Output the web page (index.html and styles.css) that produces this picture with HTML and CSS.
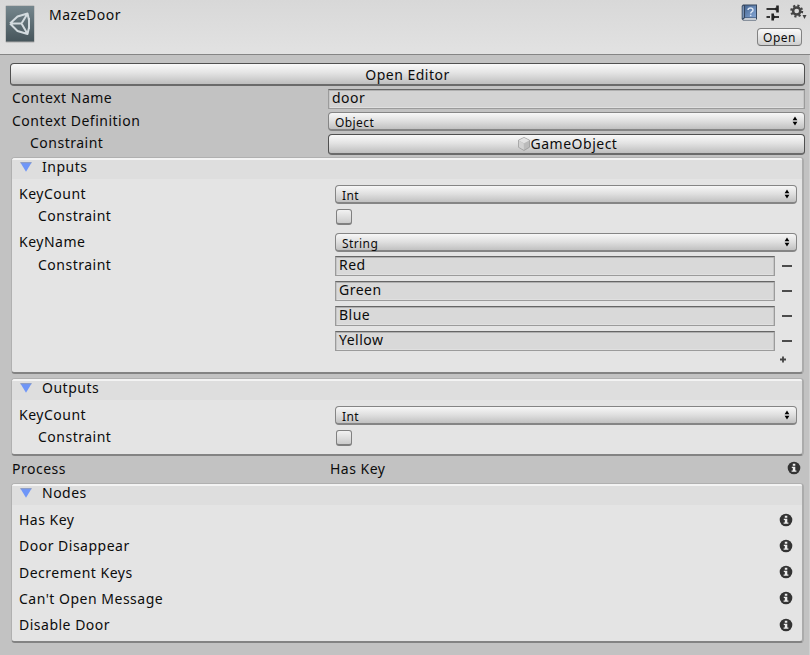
FILE: index.html
```html
<!DOCTYPE html>
<html lang="en">
<head>
<meta charset="utf-8">
<title>MazeDoor</title>
<link rel="stylesheet" href="styles.css">
</head>
<body>
<svg class="defs" width="0" height="0">
  <defs>
    <symbol id="info" viewBox="0 0 14 14"><circle cx="7" cy="7" r="6.3" fill="#333"/><path d="M5.800 2.800h2.500v2H5.800zM4.800 5.700h3.500v3.800h1.100v1.300H4.600V9.500h1.200V7h-1z" fill="#eee"/></symbol>
    <symbol id="updown" viewBox="0 0 6 10"><path d="M3 .5 5.400 4.200H.6zM3 9.500 5.400 5.800H.6z" fill="#000"/></symbol>
    <symbol id="fold" viewBox="0 0 12 10"><path d="M.4.5h11.200L6 9.800z" fill="#6f96f8"/><path d="M.4.7h11.200" stroke="#8998bd"/></symbol>
  </defs>
</svg>
<header class="header">
  <svg class="asset" viewBox="0 0 30 38" width="30" height="38">
    <defs><linearGradient id="ag" x2="0" y2="1"><stop stop-color="#75868d"/><stop offset="1" stop-color="#46555b"/></linearGradient></defs>
    <rect x=".5" y=".5" width="29" height="37" rx="1" fill="#aaa"/><rect x="1" y="1" width="28" height="35.500" fill="url(#ag)"/>
    <g fill="none" stroke="#d3dbdf" stroke-width="2"><path d="M5 18.500 12.500 11.500 22.500 8.500 24 15M5 18.500l7.500 7.500 10 3L24 22.500M5 18.500h11.500l5.500-9M16.500 18.500l5.500 9.500M24 13v11" stroke-linejoin="round"/></g>
  </svg>
  <h1 class="title">MazeDoor</h1>
  <div class="tools">
    <div class="icons">
      <svg width="17" height="18" viewBox="0 0 17 18">
        <defs><linearGradient id="bg" x2="1" y2="1"><stop stop-color="#486894"/><stop offset="1" stop-color="#83a5d4"/></linearGradient></defs>
        <path d="M2 .5h14v14l-1 2H2L.7 15V2z" fill="#34465f"/><path d="M4 1.500h11v12H4z" fill="url(#bg)"/><path d="M1.500 2.500 3 1.500v12l-1.500 1z" fill="#7992b5"/><path d="M2 15.500 4 14h11v2H3z" fill="#c5cbd3"/>
        <path d="M7 6q.2-2 2.500-2T12 6q0 1.200-1.300 1.800-1 .6-1 1.700M9.700 10.800v1.400" fill="none" stroke="#d9e5f5" stroke-width="1.500"/>
      </svg>
      <svg class="sliders" width="14" height="16" viewBox="0 0 14 16"><path d="M.5 4H9M.5 12H4M9 12h4" fill="none" stroke="#333" stroke-width="2"/><path d="M11.500.5v7M6.700 8.500v7M6.700 12H9M9 4h2" fill="none" stroke="#222" stroke-width="2.600"/></svg>
      <svg width="17" height="16" viewBox="0 0 17 16"><circle cx="6.700" cy="7" r="3.600" fill="none" stroke="#444" stroke-width="2.500"/><circle cx="6.700" cy="7" r="5.400" fill="none" stroke="#444" stroke-width="2.200" stroke-dasharray="2.120 2.120"/><path d="M12.500 11h4l-2 4z" fill="#444"/></svg>
    </div>
    <button class="open">Open</button>
  </div>
</header>
<main class="body">
  <button class="btn editor">Open Editor</button>
  <div class="row r-name"><label>Context Name</label><div class="field">door</div></div>
  <div class="row r-def"><label>Context Definition</label><div class="popup">Object<svg><use href="#updown"/></svg></div></div>
  <div class="row r-con"><label class="sub">Constraint</label><button class="btn">
    <svg width="14" height="14" viewBox="0 0 14 14"><path d="m7 .5 5.500 2.700v7L7 13.500l-5.500-3.300v-7z" fill="#bbb" stroke="#999" stroke-width=".8"/><path d="m7 .8 5.200 2.600L7 6.200 1.800 3.400z" fill="#e2e2e2"/><path d="M1.900 3.800 6.800 6.500v6.300L1.900 9.900z" fill="#d2d2d2"/></svg>GameObject</button></div>

  <section class="box inputs">
    <h2><svg><use href="#fold"/></svg>Inputs</h2>
    <div class="row key"><label>KeyCount</label><div class="popup">Int<svg><use href="#updown"/></svg></div></div>
    <div class="row chk"><label class="sub">Constraint</label><i class="check"></i></div>
    <div class="row name"><label>KeyName</label><div class="popup">String<svg><use href="#updown"/></svg></div></div>
    <div class="row list"><label class="sub">Constraint</label>
      <div class="items">
        <div class="item"><div class="field">Red</div><i class="minus"></i></div>
        <div class="item"><div class="field">Green</div><i class="minus"></i></div>
        <div class="item"><div class="field">Blue</div><i class="minus"></i></div>
        <div class="item"><div class="field">Yellow</div><i class="minus"></i></div>
        <svg class="plus" width="6" height="7" viewBox="0 0 6 7"><path d="M0 3.500h6M3 .5v6" stroke="#444" stroke-width="1.800"/></svg>
      </div>
    </div>
  </section>

  <section class="box outputs">
    <h2><svg><use href="#fold"/></svg>Outputs</h2>
    <div class="row key"><label>KeyCount</label><div class="popup">Int<svg><use href="#updown"/></svg></div></div>
    <div class="row chk"><label class="sub">Constraint</label><i class="check"></i></div>
  </section>

  <div class="row process"><label>Process</label><span>Has Key</span><svg class="info"><use href="#info"/></svg></div>

  <section class="box nodes">
    <h2><svg><use href="#fold"/></svg>Nodes</h2>
    <ul>
      <li>Has Key<svg class="info"><use href="#info"/></svg></li>
      <li>Door Disappear<svg class="info"><use href="#info"/></svg></li>
      <li>Decrement Keys<svg class="info"><use href="#info"/></svg></li>
      <li>Can't Open Message<svg class="info"><use href="#info"/></svg></li>
      <li>Disable Door<svg class="info"><use href="#info"/></svg></li>
    </ul>
  </section>
</main>
</body>
</html>
```
FILE: styles.css
```css
* { box-sizing: border-box; }
body {
  margin: 0;
  width: 810px;
  height: 655px;
  overflow: hidden;
  background: #c2c2c2;
  color: #0c0c0c;
  font: 14px/20px "Noto Sans", "DejaVu Sans", sans-serif;
  letter-spacing: .5px;
}
.defs { position: absolute; }
svg { display: block; flex: none; }
h1, h2, ul { margin: 0; padding: 0; font: inherit; }
button { font: inherit; letter-spacing: inherit; color: inherit; padding: 0; }

.header {
  display: flex;
  height: 55px;
  padding: 5px 3px 0 5px;
  background: linear-gradient(#d8d8d8, #e2e2e2);
  border-bottom: 1px solid #858585;
}
.title { margin-left: 14px; }
.tools { margin-left: auto; display: flex; flex-direction: column; align-items: flex-end; }
.icons { display: flex; gap: 9px; height: 23px; margin: -1px 0 0; }
.sliders { margin: 1px 1px 0 -1px; }
.open {
  width: 45px;
  height: 18px;
  margin: 1px 5px 0 0;
  border: 1px solid #828282;
  border-bottom-color: #6d6d6d;
  border-radius: 4px;
  background: linear-gradient(#fafafa, #cfcfcf);
  font-size: 12px;
  line-height: 18px;
}

.body { padding: 8px 4px 0 10px; border-right: 1px solid #cfcfcf; height: 600px; }
.row { display: flex; }
.row > label { flex: none; width: 316px; }
.row > .sub { padding-left: 19px; }

.btn {
  flex: 1;
  display: flex;
  align-items: center;
  justify-content: center;
  height: 21px;
  padding-left: 1px;
  border: 1px solid #505050;
  border-bottom: 2px solid #6a6a6a;
  border-radius: 4px;
  background: linear-gradient(#f9f9f9, #e3e3e3 45%, #bebebe);
}
.editor { width: 795px; height: 23px; padding: 2px 0 0; }
.field {
  flex: 1;
  height: 20px;
  padding-left: 3px;
  line-height: 16px;
  border: 1px solid #9b9b9b;
  border-top-color: #666;
  box-shadow: inset 0 1px #b0b0b0, inset 1px 0 #c6c6c6, inset -1px 0 #c6c6c6, inset 0 -1px #e0e0e0;
  background: #d3d3d3;
}
.box .field { background: #d9d9d9; }
.popup {
  flex: 1;
  display: flex;
  align-items: center;
  height: 19px;
  padding: 4px 6px 0;
  border: 1px solid #858585;
  border-bottom: 2px solid #858585;
  border-radius: 4px;
  background: linear-gradient(#f7f7f7, #dfdfdf 50%, #c1c1c1);
  font-size: 12px;
  letter-spacing: .4px;
}
.popup svg { width: 6px; height: 10px; margin: -4px 0 0 auto; }

.r-name { margin-top: 3px; height: 23px; padding-left: 2px; }
.r-def { height: 22px; padding-left: 2px; }
.r-con { height: 23px; padding-left: 2px; }
.r-name label, .r-def label, .r-con label { line-height: 17px; }
.r-con .sub { padding-left: 18px; }

.box {
  margin: 0 0 0 1px;
  width: 793px;
  padding: 1px 7px 0;
  border: 1px solid #b0b0b0;
  border-right: 2px solid #ababab;
  border-bottom: 2px solid #838383;
  border-radius: 4px;
  background: #e4e4e4;
  overflow: hidden;
}
.box h2 {
  display: flex;
  align-items: flex-start;
  height: 21px;
  margin: -1px -7px 0;
  padding-left: 9px;
  border-top: 2px solid #f3f3f3;
  background: #dedede;
  line-height: 14px;
}
.box h2 svg { width: 12px; height: 10px; margin: 2px 9px 0 -1px; }
.box h2 svg + * { margin: 0; }
.box h2 { padding-left: 9px; text-indent: 1px; }
.box .popup { flex: none; width: 462px; }
.inputs { height: 217px; }
.key { padding-top: 6px; height: 28px; }
.chk { height: 26px; }
.chk label { line-height: 18px; }
.name { height: 23px; }
.key label, .name label { line-height: 18px; }
.list label { line-height: 18px; }
.check {
  width: 16px;
  height: 16px;
  margin: 2px 0 0 1px;
  border: 1px solid #808080;
  border-bottom: 2px solid #808080;
  border-radius: 3px;
  background: linear-gradient(#f2f2f2, #ccc);
}
.items { width: 462px; }
.item { display: flex; height: 25px; align-items: flex-start; }
.item .field { flex: none; width: 440px; }
.minus { width: 10px; height: 2px; margin: 9px 0 0 7px; background: #4c4c4c; }
.plus { margin: 0 0 0 445px; }
.outputs { height: 78px; margin-top: 4px; }

.process { height: 27px; padding: 3px 0 0 2px; }
.process span { margin-left: 2px; }
.info { width: 14px; height: 14px; margin-left: auto; }
.process .info { margin: 2px 4px 0 auto; }
.nodes { height: 160px; }
.nodes ul { padding-top: 2px; list-style: none; }
.nodes li { display: flex; align-items: center; height: 26.250px; padding-right: 2px; }
.nodes .info { margin-top: -1px; }
```
